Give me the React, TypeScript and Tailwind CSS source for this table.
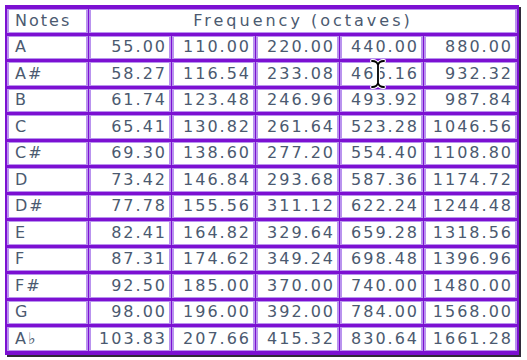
import React from "react";

const rows: [string, string[]][] = [
  ["A", ["55.00", "110.00", "220.00", "440.00", "880.00"]],
  ["A#", ["58.27", "116.54", "233.08", "466.16", "932.32"]],
  ["B", ["61.74", "123.48", "246.96", "493.92", "987.84"]],
  ["C", ["65.41", "130.82", "261.64", "523.28", "1046.56"]],
  ["C#", ["69.30", "138.60", "277.20", "554.40", "1108.80"]],
  ["D", ["73.42", "146.84", "293.68", "587.36", "1174.72"]],
  ["D#", ["77.78", "155.56", "311.12", "622.24", "1244.48"]],
  ["E", ["82.41", "164.82", "329.64", "659.28", "1318.56"]],
  ["F", ["87.31", "174.62", "349.24", "698.48", "1396.96"]],
  ["F#", ["92.50", "185.00", "370.00", "740.00", "1480.00"]],
  ["G", ["98.00", "196.00", "392.00", "784.00", "1568.00"]],
  ["A♭", ["103.83", "207.66", "415.32", "830.64", "1661.28"]],
];

const cell =
  "h-[23.5px] p-0 leading-[18px] bg-white border-x-2 border-y border-[#b993ee] align-middle";

const Cursor = () => (
  <svg className="absolute left-[368px] top-[59px]" width="20" height="30" viewBox="0 0 20 30" fill="none">
    <path d="M4 2 Q9 2 10 6 Q11 2 16 2 M10 6 V24 M4 28 Q9 28 10 24 Q11 28 16 28" stroke="white" strokeWidth={4} strokeLinecap="round" />
    <path d="M4 2 Q9 2 10 6 Q11 2 16 2 M10 6 V24 M4 28 Q9 28 10 24 Q11 28 16 28" stroke="black" strokeWidth={1.8} strokeLinecap="round" />
  </svg>
);

export default function App() {
  return (
    <div className="relative w-[527px] h-[360px] bg-white pl-[5px] pt-[5px] font-['DejaVu_Sans',sans-serif] text-[16px] text-[#4b5a70]">
      <table className="table-fixed w-[514px] border-separate border-spacing-x-px border-spacing-y-[3px] bg-[#7c10d2] border border-[#7c10d2] shadow-[2px_2px_0_#2f2a3a]">
        <colgroup>
          <col className="w-[81px]" />
          <col className="w-[82px]" />
          <col className="w-[83px]" />
          <col className="w-[83px]" />
          <col className="w-[83px]" />
          <col />
        </colgroup>
        <tbody>
          <tr>
            <td className={`${cell} pl-[6px] tracking-[2px]`}>Notes</td>
            <td colSpan={5} className={`${cell} text-center tracking-[3px]`}>
              Frequency (octaves)
            </td>
          </tr>
          {rows.map(([note, freqs]) => (
            <tr key={note}>
              <td className={`${cell} pl-[6px] tracking-[2px]`}>{note}</td>
              {freqs.map((f, i) => (
                <td key={i} className={`${cell} text-right pr-[2px] tracking-[2px]`}>
                  {f}
                </td>
              ))}
            </tr>
          ))}
        </tbody>
      </table>
      <Cursor />
    </div>
  );
}
